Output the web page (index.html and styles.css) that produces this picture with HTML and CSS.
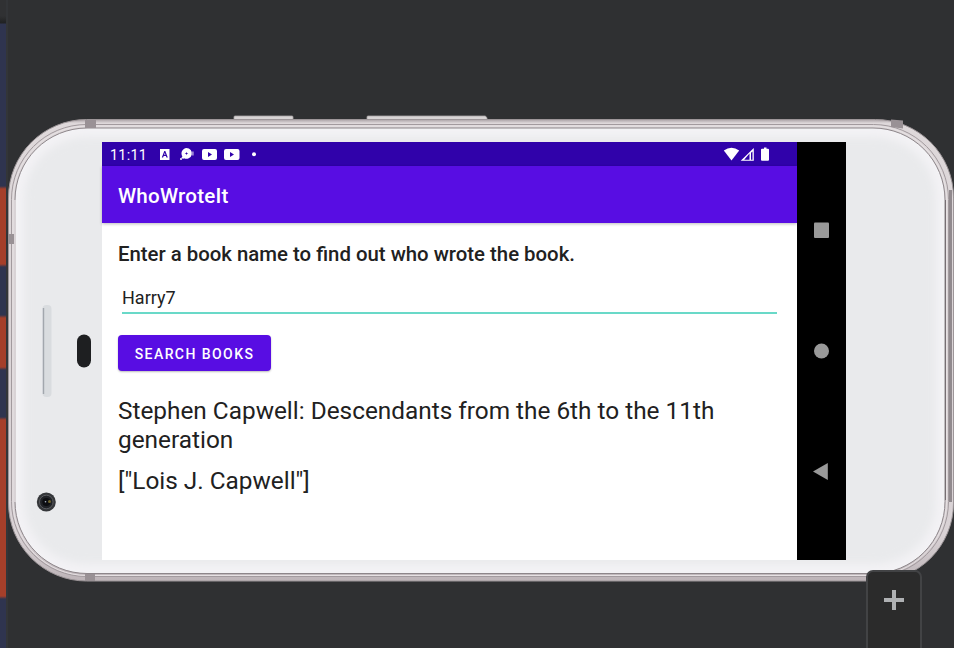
FILE: index.html
```html
<!DOCTYPE html>
<html lang="en">
<head>
<meta charset="utf-8">
<title>WhoWroteIt</title>
<link rel="stylesheet" href="styles.css">
</head>
<body>
<div class="strip"></div>
<main class="stage">
  <div class="phone">
    <svg class="shell" width="946" height="468" viewBox="8 114 946 468">
      <defs>
        <linearGradient id="rim" x1="0" y1="0" x2="0" y2="1">
          <stop offset="0" stop-color="#aaa2a5"/><stop offset=".008" stop-color="#ded8da"/>
          <stop offset=".9" stop-color="#d9d2d5"/><stop offset="1" stop-color="#bdb4b8"/>
        </linearGradient>
        <filter id="soft" x="-5%" y="-5%" width="110%" height="110%"><feGaussianBlur stdDeviation="4"/></filter>
        <clipPath id="face"><rect x="15.500" y="128.500" width="929" height="444.500" rx="72"/></clipPath>
      </defs>
      <path d="M234 119v-2q0-1 1-1h57q1 0 1 1v2M367 119v-2q0-1 1-1h117q1 0 2 2v1" fill="#d8d4d5" stroke="#a9a5a6" stroke-width=".8"/>
      <rect x="8.500" y="119.500" width="945" height="461.500" rx="78" fill="url(#rim)" stroke="#9d9699"/>
      <rect x="11.500" y="124.500" width="937" height="452" rx="75" fill="none" stroke="#a29a9e"/>
      <rect x="13" y="126" width="933.500" height="449.500" rx="74" fill="none" stroke="#e6e1e3"/>
      <path d="M950.500 190v312" stroke="#918a8e" stroke-width="3"/>
      <path d="M945.500 200v300" stroke="#5e575b"/>
      <rect x="15" y="128" width="930" height="445.500" rx="72" fill="#f3f2f5" stroke="#8d868a"/>
      <path d="M15 200v302" stroke="#d9d3d6" stroke-width="2"/>
      <g clip-path="url(#face)"><rect x="24" y="137" width="912" height="427" rx="62" fill="#e9eaec" filter="url(#soft)"/></g>
      <path d="M85 120h11v8H85zM85 574h10v7H85zM8 234h6v10H8z" fill="#999195"/>
      <path d="M891 119.500l12 1v8l-12-1.500z" fill="#999195"/>
      <rect x="42.500" y="305" width="9" height="92" rx="4" fill="#d9dcdf"/>
      <path d="M43.500 308v86" stroke="#a2a7ad" stroke-width="1.400"/>
      <rect x="77" y="334.500" width="14" height="33" rx="7" fill="#1e1f21"/>
      <circle cx="46.300" cy="502" r="9.500" fill="#35373a"/>
      <circle cx="46.300" cy="502" r="6.800" fill="#202226" stroke="#5a5c60"/>
      <circle cx="46.300" cy="502" r="4" fill="#0d0e11"/>
      <circle cx="49.500" cy="501.500" r="1.500" fill="#70652e"/><circle cx="45.500" cy="501.800" r=".8" fill="#b0bac9"/>
    </svg>
    <div class="screen">
      <section class="app">
        <div class="status">
          <span class="clock">11:11</span>
          <svg class="notices" width="100" height="24" viewBox="158 142 100 24" fill="#fff">
            <path fill-rule="evenodd" d="M160 149h9.500v11H160zM161.800 157.500h1.300l.6-1.600h2.200l.6 1.600h1.300l-2.500-6.500h-1zm2.300-2.700.7-2 .7 2z"/>
            <path fill-rule="evenodd" d="M186.500 148a5.400 5.400 0 1 1-2.500 10.200l-1 .8-1.600-1.600 1-1A5.400 5.400 0 0 1 186.500 148zm0 3.700-.4 1.400-1.400.4 1.400.4.400 1.400.4-1.400 1.400-.4-1.400-.4z"/>
            <circle cx="181" cy="159" r="1"/><path d="M192 151.500h.8v4H192zM193.400 151.500h.6v4h-.6z" opacity=".65"/>
            <path fill-rule="evenodd" d="M204 149h11q2 0 2 2v7q0 2-2 2h-11q-2 0-2-2v-7q0-2 2-2zm4 3v5l4-2.500z"/>
            <path fill-rule="evenodd" d="M226 149h11.500q2 0 2 2v7q0 2-2 2H226q-2 0-2-2v-7q0-2 2-2zm4 3v5l4-2.500z"/>
            <circle cx="254" cy="154.300" r="2"/>
          </svg>
          <svg class="signals" width="48" height="24" viewBox="723 142 48 24" fill="#fff">
            <path d="M723.800 150.500q7.700-5.500 15.400 0L731.500 160.500z"/>
            <path fill-rule="evenodd" d="M740.700 160.800 753.800 148v12.800zM749.500 153.500l-5.300 6.200h5.300zM751 152.800v6.900h1.500v-8.300z"/>
            <path d="M764 147.500h2.500v1.300h1.500q1 0 1 1v10q0 1-1 1h-6q-1 0-1-1v-10q0-1 1-1h2z"/>
          </svg>
        </div>
        <header class="bar">WhoWroteIt</header>
        <div class="content">
          <p class="prompt">Enter a book name to find out who wrote the book.</p>
          <div class="field">Harry7</div>
          <button class="search">SEARCH BOOKS</button>
          <p class="title">Stephen Capwell: Descendants from the 6th to the 11th generation</p>
          <p class="author">["Lois J. Capwell"]</p>
        </div>
      </section>
      <svg class="nav" width="49" height="418" viewBox="797 142 49 418" fill="#999">
        <rect x="814" y="222.500" width="15" height="15.500" rx="1"/>
        <circle cx="821.500" cy="351" r="7.500"/>
        <path d="M827.800 463v17L813 471.500z"/>
      </svg>
    </div>
  </div>
  <div class="zoom-panel"><svg width="20" height="20"><path d="M0 8h8V0h4v8h8v4h-8v8H8v-8H0z" fill="#afb1b3"/></svg></div>
</main>
</body>
</html>
```
FILE: styles.css
```css
* { box-sizing: border-box; }
body { margin: 0; height: 648px; display: flex; overflow: hidden; background: #2f3032; font-family: Roboto, sans-serif; color: #212121; }
.strip {
  width: 6px;
  flex: none;
  background: linear-gradient(#303133 0, #303133 16px, #202122 23px, #2f344f 24px, #2f344f 186px, #a53f2a 189px, #a53f2a 264px, #2f344f 267px, #2f344f 315px, #a53f2a 318px, #a53f2a 367px, #2f344f 370px, #2f344f 417px, #a53f2a 420px, #a53f2a 596px, #2f344f 599px);
}
.stage { position: relative; flex: 1; padding: 114px 0 0; border-left: 2px solid #333538; }
.phone { position: relative; width: 946px; height: 468px; padding: 28px 0 0 94px; }
.shell { position: absolute; left: 0; top: 0; }
.screen { position: relative; display: flex; width: 744px; height: 418px; background: #000; }
.app { width: 695px; background: #fff; }
.status { height: 24px; display: flex; align-items: center; background: #3002aa; color: #fff; padding-left: 8px; }
.clock { width: 48px; font-size: 14.3px; letter-spacing: .3px; line-height: 24px; font-weight: 400; padding-top: 2px; }
.notices { flex: none; }
.signals { margin-left: auto; margin-right: 26px; }
.bar { height: 57px; line-height: 60px; padding-left: 16px; background: #580de3; color: #fff; font-size: 20.6px; letter-spacing: .22px; font-weight: 500; box-shadow: 0 1px 3px #0004; }
.content { padding: 17px 20px 0 16px; }
p { margin: 0; }
.prompt { font-size: 20.37px; font-weight: 500; line-height: 28px; white-space: nowrap; }
.field { height: 46px; margin-left: 4px; padding: 17px 0 0; font-size: 18px; line-height: 26px; border-bottom: 2px solid #69d9c8; }
.search { display: block; width: 153px; height: 36px; margin: 21px 0 0; padding: 1px 0 0; border: 0; border-radius: 4px; background: #580de3; color: #fff; font: 500 14px/34px Roboto, sans-serif; letter-spacing: 1.43px; box-shadow: 0 1px 2px #0004; }
.title, .author { font-size: 24.36px; line-height: 29px; }
.title { margin-top: 25px; }
.author { margin-top: 12px; }
.zoom-panel { position: absolute; left: 858px; top: 570px; width: 56px; height: 90px; padding: 20px 0 0 16px; border: 2px solid #424345; border-radius: 7px 7px 0 0; background: #2b2b2b; }
.zoom-panel svg { display: block; margin-top: -2px; }
```
